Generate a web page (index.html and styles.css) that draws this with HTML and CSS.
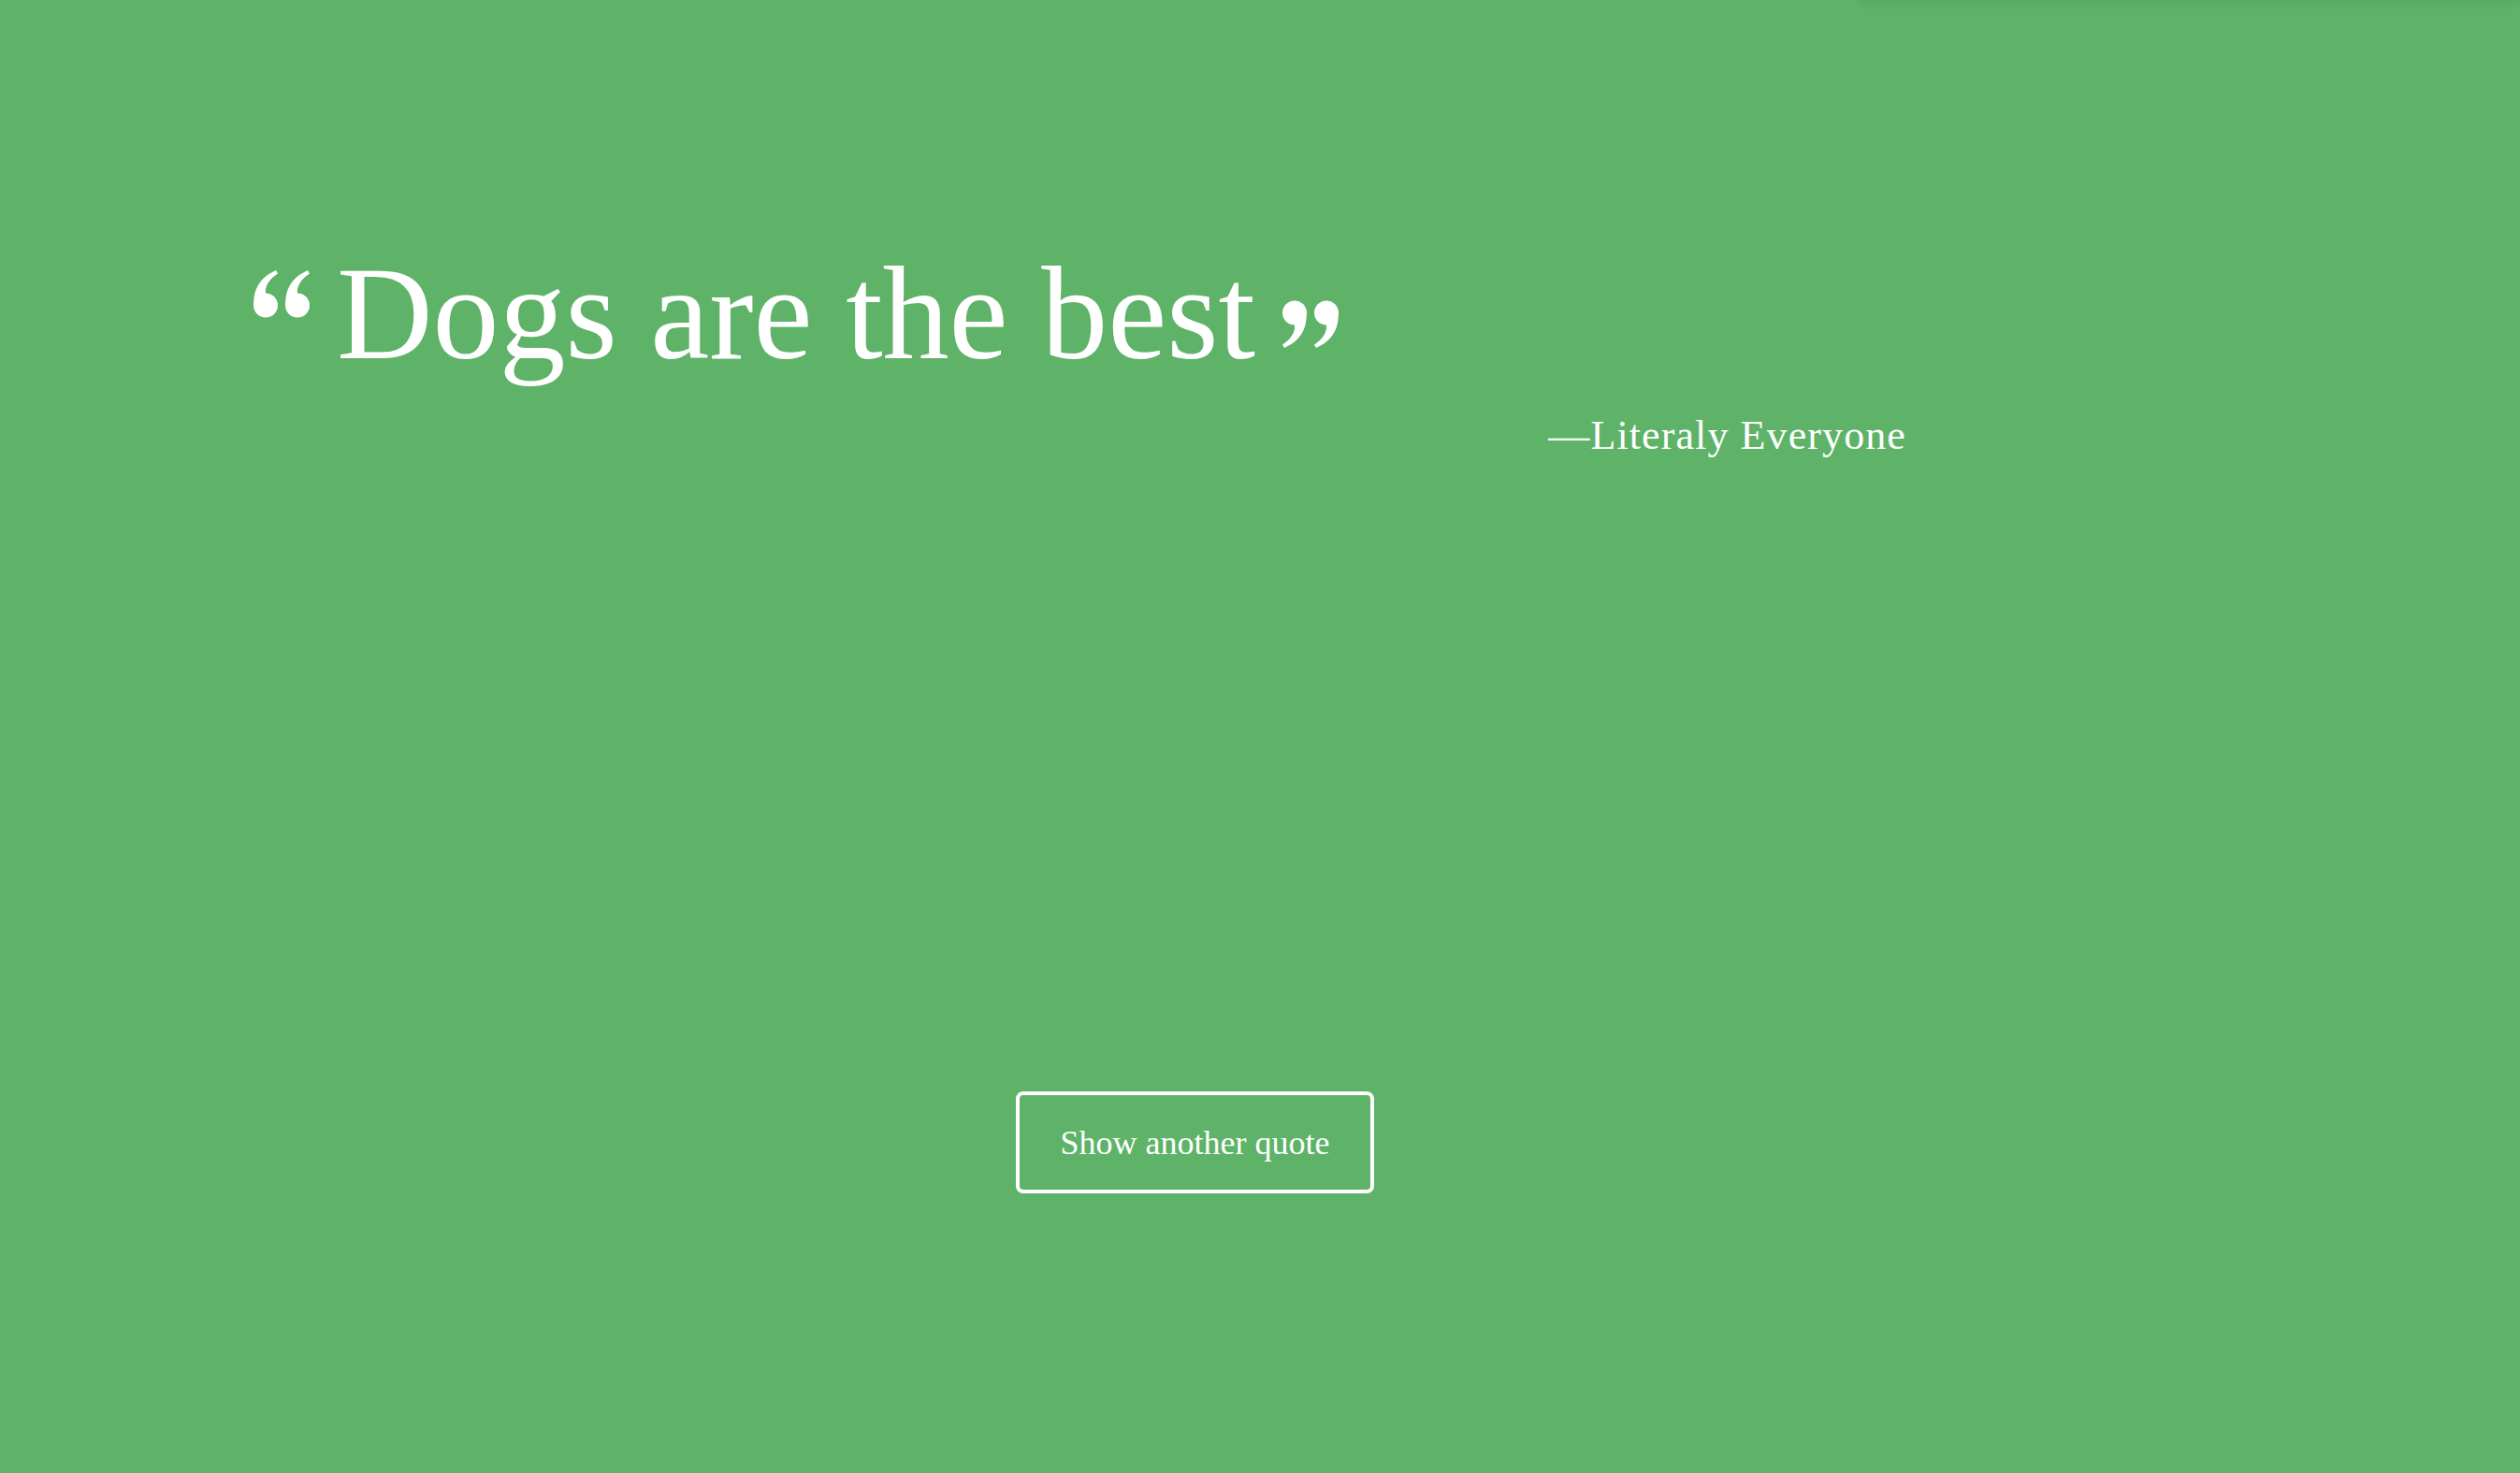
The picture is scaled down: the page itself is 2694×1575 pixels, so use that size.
FILE: index.html
```html
<!DOCTYPE html>
<html lang="en">
<head>
<meta charset="utf-8">
<title>Random Quote</title>
<link rel="stylesheet" href="styles.css">
</head>
<body>
<div class="top-shade"></div>
<main class="page">
  <div class="quote-line">
    <svg class="qmark qmark-open" viewBox="0 0 62 51" aria-hidden="true">
      <g fill="#fff">
        <path d="M1.5 38 C0 20 9 7 25 0 L27 3.5 C17 10 13 18 14 25 Z"/>
        <circle cx="14" cy="37.5" r="13"/>
        <path d="M35.5 38 C34 20 43 7 59 0 L61 3.5 C51 10 47 18 48 25 Z"/>
        <circle cx="48" cy="37.5" r="13"/>
      </g>
    </svg>
    <h1 class="quote-text">Dogs are the best</h1>
    <svg class="qmark qmark-close" viewBox="0 0 62 51" aria-hidden="true">
      <g fill="#fff" transform="rotate(180 31 25.5)">
        <path d="M1.5 38 C0 20 9 7 25 0 L27 3.5 C17 10 13 18 14 25 Z"/>
        <circle cx="14" cy="37.5" r="13"/>
        <path d="M35.5 38 C34 20 43 7 59 0 L61 3.5 C51 10 47 18 48 25 Z"/>
        <circle cx="48" cy="37.5" r="13"/>
      </g>
    </svg>
  </div>
  <p class="author">—Literaly Everyone</p>
  <button class="next-btn" type="button">Show another quote</button>
</main>
</body>
</html>
```

FILE: styles.css
```css
html, body {
  margin: 0;
  padding: 0;
  height: 100%;
}

body {
  background: #5eb368;
  color: #ffffff;
  font-family: "Liberation Serif", "Times New Roman", serif;
  overflow: hidden;
  position: relative;
}

.top-shade {
  position: absolute;
  top: -40px;
  left: 1990px;
  right: 0;
  height: 40px;
  box-shadow: 0 0 14px rgba(0, 0, 0, 0.12);
}

.page {
  box-sizing: border-box;
  width: 2285px;
  padding: 265px 0 0 270px;
  display: flex;
  flex-direction: column;
}

.quote-line {
  display: flex;
  align-items: flex-start;
  gap: 28px;
  height: 140px;
}

.qmark {
  width: 62px;
  height: 51px;
  flex: none;
}

.qmark-open {
  margin-top: 24px;
}

.qmark-close {
  margin-top: 56px;
}

.quote-text {
  margin: 0;
  font-weight: 400;
  font-size: 142px;
  line-height: 140px;
  white-space: nowrap;
}

.author {
  margin: 39px 0 0 0;
  padding-right: 247px;
  text-align: right;
  font-size: 44px;
  line-height: 44px;
  letter-spacing: 1.1px;
}

.next-btn {
  align-self: center;
  box-sizing: border-box;
  width: 383px;
  height: 109px;
  margin-top: 679px;
  padding: 0;
  text-align: center;
  background: transparent;
  color: #ffffff;
  border: 4px solid #ffffff;
  border-radius: 8px;
  font-family: "Liberation Serif", "Times New Roman", serif;
  font-size: 36px;
  line-height: 36px;
  cursor: pointer;
}
```
